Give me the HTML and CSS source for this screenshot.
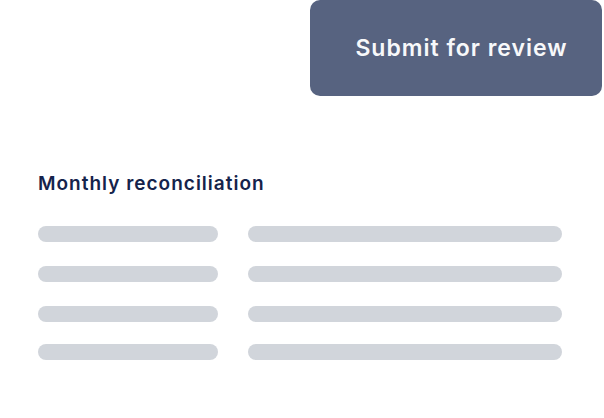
FILE: index.html
```html
<!DOCTYPE html>
<html lang="en">
<head>
<meta charset="utf-8">
<title>Monthly reconciliation</title>
<link rel="stylesheet" href="styles.css">
</head>
<body>
<header class="top">
  <button class="submit">Submit for review</button>
</header>
<section class="card">
  <h2 class="title">Monthly reconciliation</h2>
  <div class="rows">
    <div class="row"><span class="bar bar-a"></span><span class="bar bar-b"></span></div>
    <div class="row"><span class="bar bar-a"></span><span class="bar bar-b"></span></div>
    <div class="row"><span class="bar bar-a"></span><span class="bar bar-b"></span></div>
    <div class="row row-last"><span class="bar bar-a"></span><span class="bar bar-b"></span></div>
  </div>
</section>
</body>
</html>
```

FILE: styles.css
```css
html, body {
  margin: 0;
  padding: 0;
  background: #ffffff;
  font-family: "Inter", "Open Sans", sans-serif;
}

.top {
  display: flex;
  justify-content: flex-end;
  padding-right: 2px;
}

.submit {
  width: 292px;
  height: 96px;
  border: none;
  border-radius: 10px;
  background: #576380;
  color: #f7f8fa;
  font-family: inherit;
  font-size: 23px;
  font-weight: 600;
  letter-spacing: 1px;
  padding: 0 0 0 11px;
  cursor: pointer;
}

.card {
  padding-left: 38px;
  padding-top: 76px;
}

.title {
  margin: 0;
  font-size: 19px;
  font-weight: 600;
  letter-spacing: 1px;
  line-height: 24px;
  color: #15234b;
}

.rows {
  margin-top: 30px;
  display: flex;
  flex-direction: column;
  gap: 24px;
}

.row {
  display: flex;
  gap: 30px;
}

.row-last {
  margin-top: -2px;
}

.bar {
  display: block;
  height: 16px;
  border-radius: 8px;
  background: #d1d5db;
}

.bar-a { width: 180px; }
.bar-b { width: 314px; }
```
